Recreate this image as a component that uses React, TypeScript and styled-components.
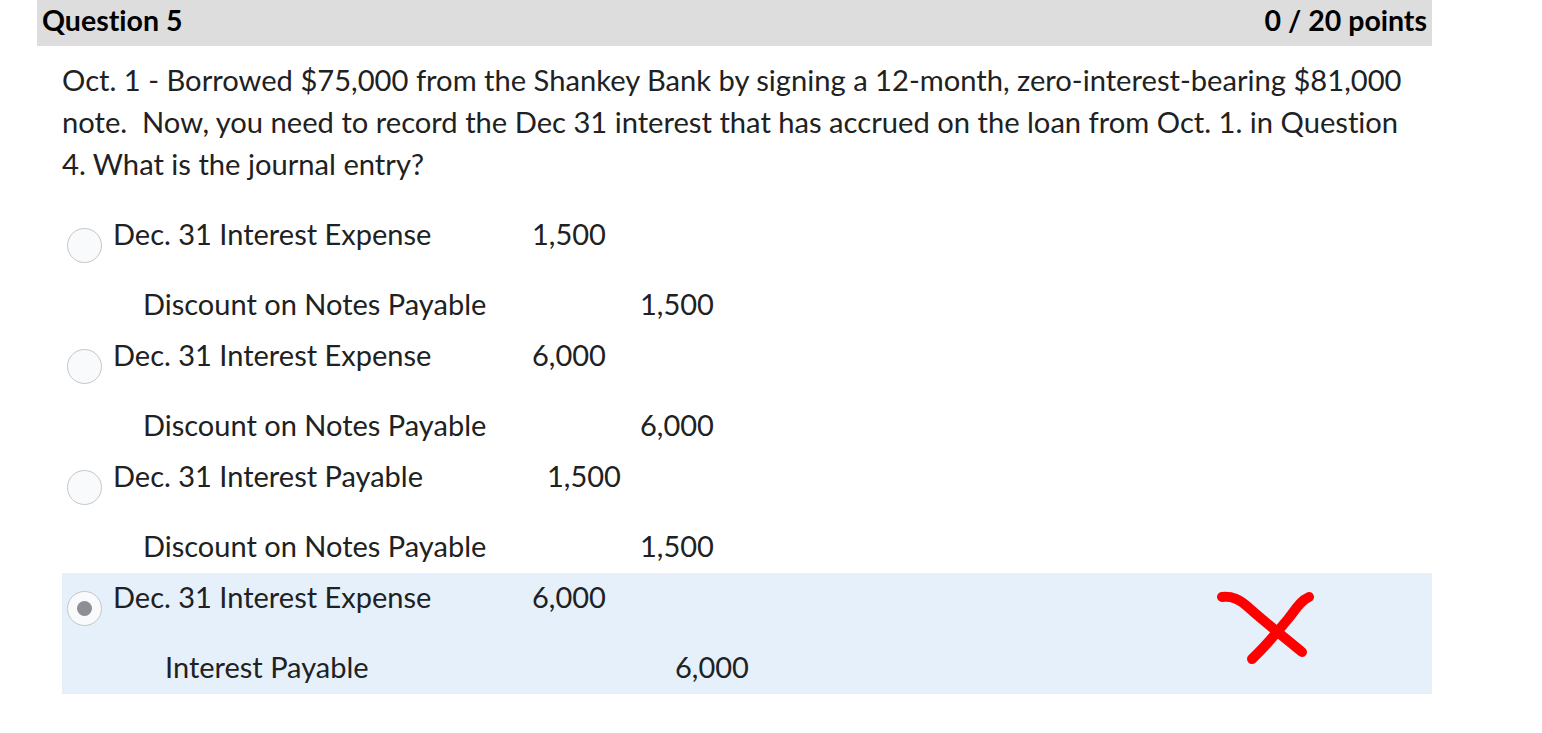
import React from 'react';
import styled, { createGlobalStyle } from 'styled-components';

type Entry = {
  debit: string;
  debitAmount: string;
  debitWidth: number;
  credit: string;
  creditAmount: string;
  creditIndent: number;
  creditWidth: number;
  selected?: boolean;
  wrong?: boolean;
};

const entries: Entry[] = [
  {
    debit: 'Dec. 31 Interest Expense',
    debitAmount: '1,500',
    debitWidth: 419,
    credit: 'Discount on Notes Payable',
    creditAmount: '1,500',
    creditIndent: 30,
    creditWidth: 497
  },
  {
    debit: 'Dec. 31 Interest Expense',
    debitAmount: '6,000',
    debitWidth: 419,
    credit: 'Discount on Notes Payable',
    creditAmount: '6,000',
    creditIndent: 30,
    creditWidth: 497
  },
  {
    debit: 'Dec. 31 Interest Payable',
    debitAmount: '1,500',
    debitWidth: 434,
    credit: 'Discount on Notes Payable',
    creditAmount: '1,500',
    creditIndent: 30,
    creditWidth: 497
  },
  {
    debit: 'Dec. 31 Interest Expense',
    debitAmount: '6,000',
    debitWidth: 419,
    credit: 'Interest Payable',
    creditAmount: '6,000',
    creditIndent: 52,
    creditWidth: 510,
    selected: true,
    wrong: true
  }
];

const WrongMark = () => (
  <svg width="105" height="80" viewBox="0 0 105 80">
    <g fill="none" stroke="#ff0000" strokeWidth="10" strokeLinecap="round">
      <path d="M10 10 C20 9, 27 12, 36 20 C48 31, 68 47, 90 65" />
      <path d="M97 10 C88 14, 84 22, 76 32 C66 44, 55 58, 40 72" />
    </g>
  </svg>
);

const App = () => (
  <>
    <GlobalStyle />
    <Page>
      <Header>
        <span>Question 5</span>
        <span>0 / 20 points</span>
      </Header>
      <Prompt>
        Oct. 1 - Borrowed $75,000 from the Shankey Bank by signing a 12-month,
        zero-interest-bearing $81,000 note.&nbsp; Now, you need to record the
        Dec 31 interest that has accrued on the loan from Oct. 1. in Question
        4. What is the journal entry?
      </Prompt>
      <Options>
        {entries.map((e, i) => (
          <Option key={i} $selected={e.selected}>
            <Radio $checked={e.selected} />
            <Body>
              <Line>
                <Label $width={e.debitWidth}>{e.debit}</Label>
                <span>{e.debitAmount}</span>
              </Line>
              <Line $indent={e.creditIndent} $gap>
                <Label $width={e.creditWidth}>{e.credit}</Label>
                <span>{e.creditAmount}</span>
              </Line>
            </Body>
            {e.wrong && (
              <Mark>
                <WrongMark />
              </Mark>
            )}
          </Option>
        ))}
      </Options>
    </Page>
  </>
);

const GlobalStyle = createGlobalStyle`
  html, body {
    margin: 0;
    padding: 0;
    background: #ffffff;
  }
  body {
    font-family: Lato, 'Open Sans', sans-serif;
    font-variant-ligatures: no-common-ligatures;
    color: #202122;
  }
`;

const Page = styled.div`
  width: 1395px;
  margin-left: 37px;
`;

const Header = styled.div`
  display: flex;
  justify-content: space-between;
  align-items: flex-start;
  height: 46px;
  padding: 0 5px;
  background: #dddddd;
  color: #000000;
  font-weight: 700;
  font-size: 28.5px;
  line-height: 40px;
`;

const Prompt = styled.p`
  margin: 13px 0 0 25px;
  width: 1362px;
  font-size: 29.15px;
  line-height: 42px;
`;

const Options = styled.div`
  margin: 25px 0 0 25px;
  display: flex;
  flex-direction: column;
`;

const Option = styled.div<{ $selected?: boolean }>`
  display: flex;
  align-items: flex-start;
  height: 121px;
  background: ${p => (p.$selected ? '#e6f0fa' : 'transparent')};
`;

const Radio = styled.span<{ $checked?: boolean }>`
  flex: none;
  box-sizing: border-box;
  width: 35px;
  height: 35px;
  margin: 18px 11px 0 5px;
  border-radius: 50%;
  border: 1px solid #c4c6c8;
  background: #f9fafb;
  display: flex;
  align-items: center;
  justify-content: center;

  &::after {
    content: '';
    display: ${p => (p.$checked ? 'block' : 'none')};
    width: 15px;
    height: 15px;
    border-radius: 50%;
    background: #8c8f93;
  }
`;

const Body = styled.div`
  flex: 1;
  font-size: 29px;
`;

const Line = styled.div<{ $indent?: number; $gap?: boolean }>`
  display: flex;
  height: 48px;
  line-height: 48px;
  padding-left: ${p => p.$indent ?? 0}px;
  margin-top: ${p => (p.$gap ? 22 : 0)}px;
  white-space: nowrap;
`;

const Label = styled.span<{ $width: number }>`
  flex: none;
  width: ${p => p.$width}px;
`;

const Mark = styled.div`
  flex: none;
  margin: 14px 115px 0 0;
  line-height: 0;
`;

export default App;
